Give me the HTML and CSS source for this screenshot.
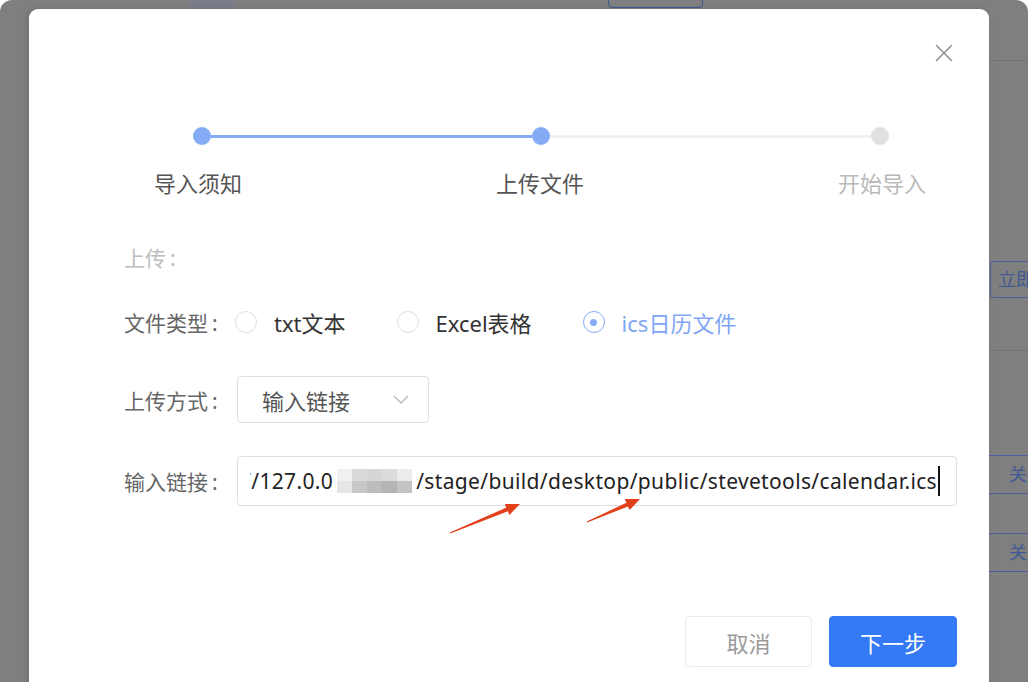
FILE: index.html
```html
<!DOCTYPE html>
<html lang="zh-CN">
<head>
    <meta charset="UTF-8">
    <meta name="viewport" content="width=device-width, initial-scale=1.0">
    <title>导入日历</title>
    <link rel="stylesheet" href="styles.css">
</head>
<body>
    <div class="screen">
        <div class="page-behind">
            <div class="bg-tab"></div>
            <div class="bg-btn"></div>
            <div class="bg-line line-top"></div>
            <div class="bg-action">立即</div>
            <div class="bg-line line-mid"></div>
            <div class="bg-row row-a">关</div>
            <div class="bg-row row-b">关</div>
        </div>

        <div class="dialog">
            <button class="close" aria-label="关闭">
                <svg width="18" height="18" viewBox="0 0 18 18">
                    <path d="M1 1 L17 17 M17 1 L1 17" stroke="#8e9098" stroke-width="1.6" fill="none"/>
                </svg>
            </button>

            <div class="steps">
                <div class="track">
                    <span class="dot done"></span>
                    <span class="bar done"></span>
                    <span class="dot done"></span>
                    <span class="bar"></span>
                    <span class="dot"></span>
                </div>
                <div class="step-labels">
                    <span>导入须知</span>
                    <span>上传文件</span>
                    <span class="todo">开始导入</span>
                </div>
            </div>

            <div class="form">
                <div class="section-title">上传<span class="colon">:</span></div>

                <div class="form-row type-row">
                    <label>文件类型<span class="colon">:</span></label>
                    <div class="radios">
                        <span class="radio"><i class="circle"></i>txt文本</span>
                        <span class="radio"><i class="circle"></i>Excel表格</span>
                        <span class="radio checked"><i class="circle"></i>ics日历文件</span>
                    </div>
                </div>

                <div class="form-row select-row">
                    <label>上传方式<span class="colon">:</span></label>
                    <div class="select">
                        <span>输入链接</span>
                        <svg width="16" height="9" viewBox="0 0 16 9">
                            <path d="M1 1 L8 8 L15 1" stroke="#b4b7be" stroke-width="1.3" fill="none"/>
                        </svg>
                    </div>
                </div>

                <div class="form-row link-row">
                    <label>输入链接<span class="colon">:</span></label>
                    <div class="text-input">
                        <div class="scroll">
                            <span class="value">//127.0.0<span class="blur"><i></i><i></i><i></i><i></i><i></i><i></i><i></i><i></i><i></i><i></i></span>/stage/build/desktop/public/stevetools/calendar.ics</span>
                            <span class="caret"></span>
                        </div>
                    </div>
                </div>
            </div>

            <div class="footer">
                <button class="btn">取消</button>
                <button class="btn primary">下一步</button>
            </div>
        </div>

        <svg class="arrows" width="1028" height="682" viewBox="0 0 1028 682">
            <polygon points="450.2,533.5 507.9,511.2 509.4,514.9 520,504 504.8,503.9 506.3,507.6 449.8,532.5" fill="#e1401b"/>
            <polygon points="587.2,522.5 628.0,506.4 629.6,510.1 640,499 624.8,499.1 626.4,502.8 586.8,521.5" fill="#e1401b"/>
        </svg>
    </div>
</body>
</html>
```

FILE: styles.css
```css
* {
    box-sizing: border-box;
}

body {
    margin: 0;
    background: #ffffff;
    font-family: "Noto Sans", "Noto Sans CJK SC", sans-serif;
    overflow: hidden;
}

.screen {
    position: relative;
    width: 1028px;
    height: 682px;
    background: #7f7f7f;
    border-radius: 12px 12px 0 0;
    overflow: hidden;
}

/* faded page under the overlay */
.page-behind {
    position: absolute;
    inset: 0;
}

.bg-tab {
    position: absolute;
    left: 188px;
    top: 0;
    width: 47px;
    height: 9px;
    background: #7b7e8a;
}

.bg-btn {
    position: absolute;
    left: 608px;
    top: -12px;
    width: 95px;
    height: 20px;
    border: 1px solid #40598f;
    border-radius: 4px;
}

.bg-line {
    position: absolute;
    left: 989px;
    right: 0;
    height: 1px;
    background: #747474;
}

.line-top {
    top: 60px;
}

.line-mid {
    top: 350px;
}

.bg-action {
    position: absolute;
    left: 990px;
    top: 261px;
    width: 38px;
    height: 37px;
    border: 1px solid #4a63a0;
    border-right: none;
    border-radius: 4px 0 0 4px;
    color: #3f5a95;
    font-size: 18px;
    line-height: 35px;
    padding-left: 7px;
    white-space: nowrap;
    overflow: hidden;
}

.bg-row {
    position: absolute;
    left: 989px;
    right: 0;
    height: 39px;
    border-top: 1px solid #4a63a0;
    border-bottom: 1px solid #4a63a0;
    color: #3f5a95;
    font-size: 18px;
    line-height: 37px;
    padding-left: 20px;
}

.row-a {
    top: 455px;
}

.row-b {
    top: 533px;
}

/* dialog */
.dialog {
    position: absolute;
    left: 29px;
    top: 9px;
    width: 960px;
    height: 700px;
    background: #ffffff;
    border-radius: 9px;
    box-shadow: -2px 0 6px rgba(0, 0, 0, 0.12);
    padding: 118px 32px 0 95px;
}

.close {
    position: absolute;
    top: 35px;
    right: 36px;
    width: 18px;
    height: 18px;
    padding: 0;
    border: none;
    background: none;
}

.close svg {
    display: block;
}

.steps {
    width: 838px;
    margin-left: -2px;
}

.track {
    display: flex;
    align-items: center;
    margin: 0 71px;
}

.dot {
    width: 18px;
    height: 18px;
    border-radius: 50%;
    background: #e1e1e1;
    flex-shrink: 0;
}

.dot.done {
    background: #86abf6;
}

.bar {
    flex: 1;
    height: 3px;
    background: #f1f1f1;
}

.bar.done {
    background: #86abf6;
}

.step-labels {
    display: flex;
    justify-content: space-between;
    margin-top: 23px;
}

.step-labels span {
    width: 160px;
    text-align: center;
    font-size: 22px;
    line-height: 30px;
    color: #555555;
}

.step-labels span:first-child {
    margin-left: -4px;
}

.step-labels .todo {
    color: #b9b9b9;
    margin-right: -2px;
}

.colon {
    margin-left: 4px;
}

.section-title {
    margin-top: 46px;
    font-size: 21px;
    line-height: 28px;
    color: #bdbdbd;
}

.form-row {
    display: flex;
    align-items: center;
}

.form-row label {
    width: 113px;
    flex-shrink: 0;
    font-size: 21px;
    color: #666666;
}

.type-row {
    height: 48px;
    margin-top: 26px;
}

.radios {
    display: flex;
    gap: 53px;
}

.radio {
    display: flex;
    align-items: center;
    font-size: 22px;
    color: #333333;
}

.circle {
    width: 22px;
    height: 22px;
    border: 1px solid #dcdfe6;
    border-radius: 50%;
    margin-left: -2px;
    margin-right: 17px;
    display: flex;
    align-items: center;
    justify-content: center;
}

.radio.checked {
    color: #7fa7f4;
}

.radio.checked .circle {
    border-color: #86abf6;
}

.radio.checked .circle::after {
    content: "";
    width: 7px;
    height: 7px;
    border-radius: 50%;
    background: #86abf6;
}

.select-row {
    margin-top: 30px;
}

.select {
    width: 192px;
    height: 47px;
    border: 1px solid #dcdfe6;
    border-radius: 4px;
    display: flex;
    align-items: center;
    justify-content: space-between;
    padding: 0 19px 0 24px;
    font-size: 22px;
    color: #555555;
}

.link-row {
    margin-top: 33px;
}

.text-input {
    width: 720px;
    height: 50px;
    border: 1px solid #dcdfe6;
    border-radius: 4px;
    padding: 0 16px 0 12px;
    display: flex;
    align-items: center;
}

.scroll {
    flex: 1;
    min-width: 0;
    display: flex;
    align-items: center;
    justify-content: flex-end;
    overflow: hidden;
}

.value {
    white-space: nowrap;
    font-size: 21px;
    letter-spacing: 0.35px;
    color: #222222;
    display: flex;
    align-items: center;
    flex-shrink: 0;
}

.blur {
    display: grid;
    grid-template-columns: repeat(5, 15px);
    grid-template-rows: 12px 12px;
    margin: 0 4px;
}

.blur i:nth-child(1) { background: #f0f0f0; }
.blur i:nth-child(2) { background: #dadada; }
.blur i:nth-child(3) { background: #d6d6d6; }
.blur i:nth-child(4) { background: #dcdcdc; }
.blur i:nth-child(5) { background: #ececec; }
.blur i:nth-child(6) { background: #e6e6e6; }
.blur i:nth-child(7) { background: #c8c8c8; }
.blur i:nth-child(8) { background: #bdbdbd; }
.blur i:nth-child(9) { background: #b4b4b4; }
.blur i:nth-child(10) { background: #c4c4c4; }

.caret {
    width: 2px;
    height: 30px;
    background: #111111;
    margin-left: 1px;
    flex-shrink: 0;
}

.footer {
    display: flex;
    justify-content: flex-end;
    gap: 17px;
    margin-top: 110px;
}

.btn {
    width: 127px;
    height: 51px;
    border: 1px solid #ebebeb;
    border-radius: 4px;
    background: #ffffff;
    color: #9a9a9a;
    font-family: "Noto Sans CJK SC", sans-serif;
    font-size: 22px;
}

.btn.primary {
    width: 128px;
    background: #3479f6;
    border-color: #3479f6;
    color: #ffffff;
}

.arrows {
    position: absolute;
    left: 0;
    top: 0;
    pointer-events: none;
}
```
